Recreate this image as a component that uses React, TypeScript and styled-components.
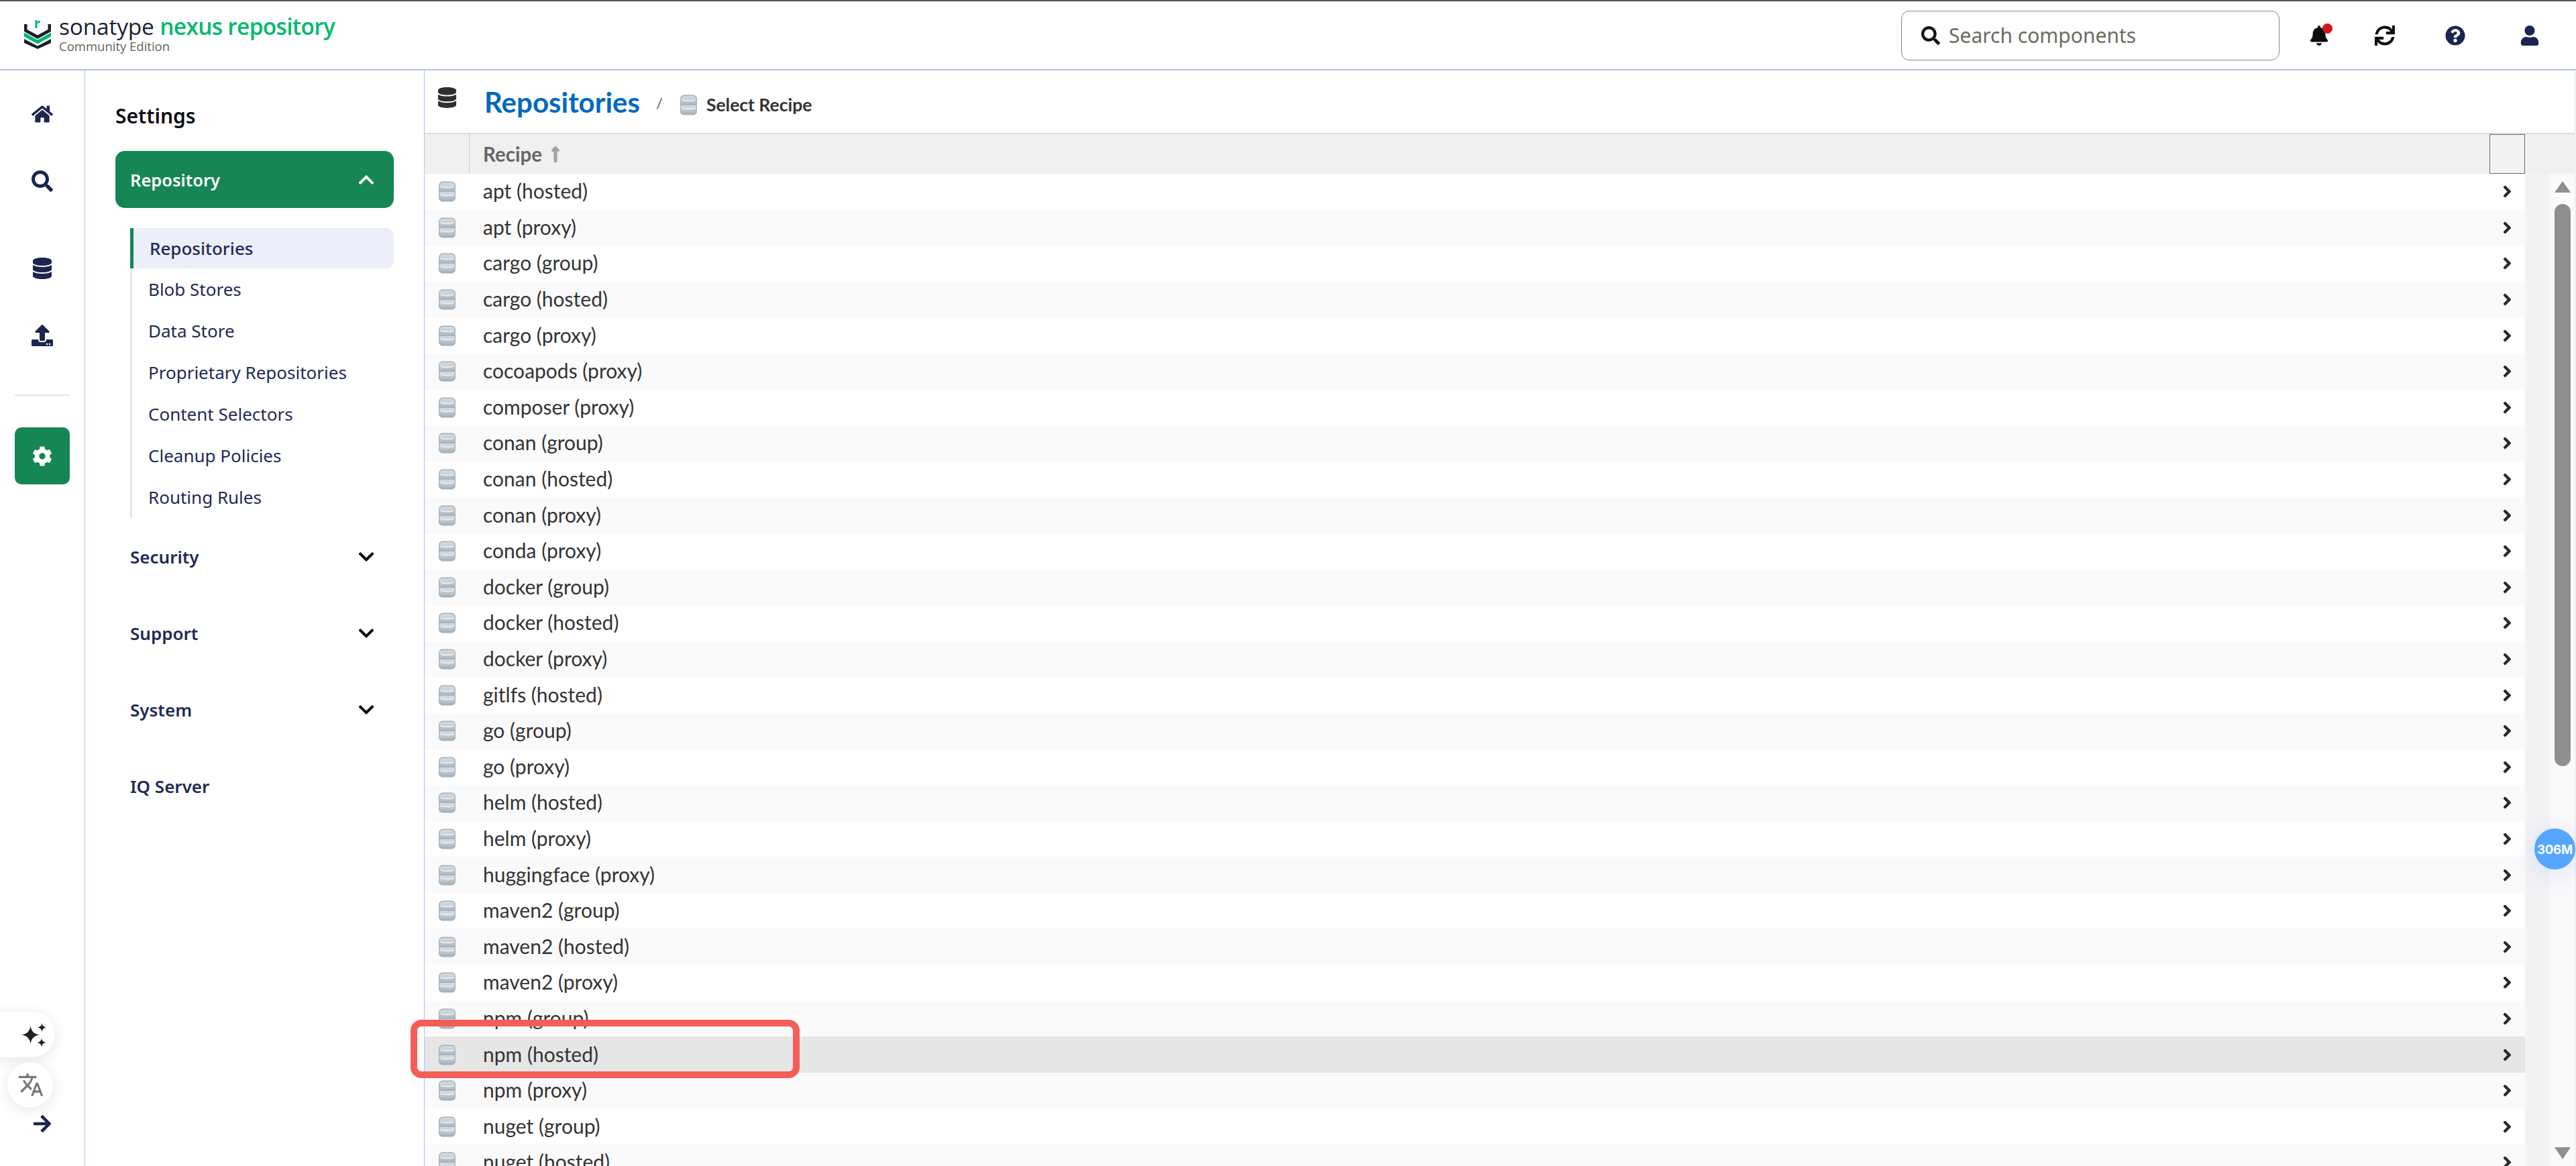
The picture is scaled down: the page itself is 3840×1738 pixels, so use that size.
import React from 'react';
import styled, { createGlobalStyle } from 'styled-components';
import {
  FaHome,
  FaSearch,
  FaDatabase,
  FaUpload,
  FaCog,
  FaChevronUp,
  FaChevronDown,
  FaChevronRight,
  FaBell,
  FaSync,
  FaQuestionCircle,
  FaUser,
  FaArrowRight,
  FaLongArrowAltUp,
} from 'react-icons/fa';
import { MdTranslate } from 'react-icons/md';

const GlobalStyle = createGlobalStyle`
  html, body {
    margin: 0;
    padding: 0;
    background: #fff;
    overflow: hidden;
  }
  * { box-sizing: border-box; }
`;

const Page = styled.div`
  position: relative;
  width: 3840px;
  height: 1738px;
  overflow: hidden;
  display: flex;
  flex-direction: column;
  font-family: 'Noto Sans', 'Open Sans', sans-serif;
  background: #fff;
`;

const TopBar = styled.header`
  flex: 0 0 105px;
  display: flex;
  align-items: center;
  border-top: 2px solid #5a4d5c;
  border-bottom: 2px solid #b3c1ea;
  padding: 0 13px 0 35px;
`;

const Logo = styled.div`
  display: flex;
  align-items: center;
  gap: 11px;
  margin-top: -5px;
`;

const LogoText = styled.div`
  display: flex;
  flex-direction: column;
`;

const Brand = styled.div`
  font-family: 'Open Sans', sans-serif;
  font-size: 33.5px;
  line-height: 38px;
  font-weight: 500;
  letter-spacing: -0.2px;
  color: #1b1f31;
  white-space: nowrap;
`;

const BrandGreen = styled.span`
  color: #00ba6c;
  font-weight: 600;
  letter-spacing: -0.7px;
`;

const Edition = styled.div`
  font-family: 'Open Sans', sans-serif;
  font-size: 18.5px;
  line-height: 22px;
  color: #63645e;
`;

const SearchBox = styled.div`
  margin-left: auto;
  width: 564px;
  height: 74px;
  border: 1px solid #85857a;
  border-radius: 12px;
  display: flex;
  align-items: center;
  gap: 13px;
  padding-left: 29px;
  color: #111;
  font-size: 28px;
`;

const Placeholder = styled.span`
  font-family: 'Noto Sans', sans-serif;
  font-size: 30px;
  color: #6b6b60;
`;

const TopIcons = styled.div`
  display: flex;
  align-items: center;
  margin-left: 11px;
`;

const TopIcon = styled.div<{ $w: number; $color: string }>`
  position: relative;
  width: ${(p) => p.$w}px;
  display: flex;
  justify-content: center;
  color: ${(p) => p.$color};
  font-size: 30px;
`;

const BellDot = styled.span`
  position: absolute;
  top: -3px;
  left: 53px;
  width: 15px;
  height: 15px;
  border-radius: 50%;
  background: #d0161b;
`;

const Body = styled.div`
  flex: 1;
  display: flex;
  min-height: 0;
`;

const Rail = styled.nav`
  flex: 0 0 127px;
  border-right: 1px solid #b3c1ea;
  display: flex;
  flex-direction: column;
  align-items: center;
  padding-top: 46px;
  padding-bottom: 48px;
  color: #1b2550;
`;

const RailIcon = styled.div<{ $gap?: number }>`
  height: 38px;
  margin-bottom: ${(p) => p.$gap ?? 62}px;
  display: flex;
  align-items: center;
  justify-content: center;
  font-size: 32px;
`;

const RailDivider = styled.div`
  width: 82px;
  height: 2px;
  background: #dfe3f3;
  margin-top: 7px;
`;

const RailActive = styled.div`
  width: 82px;
  height: 85px;
  margin-top: 47px;
  border-radius: 10px;
  background: #168654;
  color: #fff;
  font-size: 30px;
  display: flex;
  align-items: center;
  justify-content: center;
`;

const Collapse = styled.div`
  margin-top: auto;
  font-size: 30px;
  line-height: 0;
`;

const Floating = styled.div<{ $top: number; $left: number; $width: number }>`
  position: absolute;
  top: ${(p) => p.$top}px;
  left: ${(p) => p.$left}px;
  width: ${(p) => p.$width}px;
  height: 68px;
  border-radius: 34px;
  background: #fff;
  box-shadow: 0 4px 20px rgba(0, 0, 0, 0.1);
  display: flex;
  align-items: center;
  justify-content: flex-end;
`;

const FloatingGlyph = styled.div<{ $pad: number; $color: string; $size: number }>`
  padding-right: ${(p) => p.$pad}px;
  color: ${(p) => p.$color};
  font-size: ${(p) => p.$size}px;
  line-height: 0;
`;

const Settings = styled.aside`
  flex: 0 0 506px;
  border-right: 1px solid #b3c1ea;
  padding: 47px 45px 0 45px;
`;

const SettingsTitle = styled.h2`
  margin: 0 0 31px;
  font-family: 'Noto Sans', sans-serif;
  font-size: 30px;
  line-height: 42px;
  font-weight: 600;
  color: #0d0d12;
`;

const SectionActive = styled.div`
  height: 85px;
  border-radius: 14px;
  background: #168654;
  color: #fff;
  display: flex;
  align-items: center;
  justify-content: space-between;
  padding: 0 28px 0 22px;
  font-size: 25.5px;
  font-weight: 600;
`;

const SubList = styled.ul`
  list-style: none;
  margin: 30px 0 0 22px;
  padding: 0;
  border-left: 3px solid #e5e5e5;
`;

const SubItem = styled.li<{ $active?: boolean }>`
  height: ${(p) => (p.$active ? 60 : 62)}px;
  margin-left: -3px;
  display: flex;
  align-items: center;
  padding-left: ${(p) => (p.$active ? 24 : 27)}px;
  font-size: 26px;
  color: #1f2a55;
  background: ${(p) => (p.$active ? '#eceef8' : 'transparent')};
  border-left: ${(p) => (p.$active ? '5px solid #168654' : 'none')};
  border-radius: ${(p) => (p.$active ? '0 12px 12px 0' : '0')};
  font-weight: ${(p) => (p.$active ? 500 : 400)};
`;

const Section = styled.div`
  height: 114px;
  display: flex;
  align-items: center;
  justify-content: space-between;
  padding: 0 28px 0 22px;
  font-size: 26px;
  font-weight: 600;
  color: #1f2a55;
`;

const SectionList = styled.div`
  margin-top: 1px;
`;

const Chevron = styled.span<{ $dark?: boolean }>`
  font-size: 26px;
  line-height: 0;
  color: ${(p) => (p.$dark ? '#000' : '#fff')};
`;

const Main = styled.main`
  flex: 1;
  min-width: 0;
  display: flex;
  flex-direction: column;
  border-right: 2px solid #eef0f6;
  font-family: Lato, 'Open Sans', sans-serif;
`;

const PageHead = styled.div`
  flex: 0 0 93px;
  display: flex;
  align-items: flex-start;
  padding: 23px 0 0 18px;
`;

const HeadIcon = styled.div`
  font-size: 31px;
  line-height: 0;
  margin-top: 2px;
  color: #2f2f2f;
  margin-right: 40px;
`;

const Title = styled.h1`
  margin: 0;
  font-size: 42px;
  line-height: 48px;
  font-weight: 700;
  color: #0069be;
`;

const Slash = styled.span`
  margin: 12px 25px 0 24px;
  font-size: 22px;
  color: #555;
`;

const Crumb = styled.div`
  display: flex;
  align-items: center;
  gap: 13px;
  margin-top: 12px;
  font-size: 26.5px;
  line-height: 32px;
  font-weight: 700;
  color: #333;
`;

const TableHead = styled.div`
  flex: 0 0 61px;
  display: flex;
  align-items: stretch;
  background: #f0f0f0;
  border-top: 2px solid #dcdcdc;
  padding-right: 74px;
  color: #666;
`;

const HeadIconCell = styled.div`
  width: 67px;
  border-right: 1px solid #c8c8c8;
`;

const HeadLabel = styled.div`
  flex: 1;
  display: flex;
  align-items: center;
  gap: 7px;
  padding-left: 20px;
  font-size: 29.5px;
  font-weight: 700;
`;

const SortArrow = styled.span`
  color: #a3a3a3;
  font-size: 26px;
  line-height: 0;
  svg {
    stroke: currentColor;
    stroke-width: 20;
  }
`;

const HeadBox = styled.div`
  width: 53px;
  border: 1px solid #6a6a6a;
  background: #f3f3f3;
`;

const TableWrap = styled.div`
  flex: 1;
  min-height: 0;
  display: flex;
  overflow: hidden;
`;

const Rows = styled.div`
  flex: 1;
  min-width: 0;
`;

const Row = styled.div<{ $odd: boolean; $selected: boolean }>`
  height: 53.6px;
  display: flex;
  align-items: center;
  padding-left: 20px;
  font-size: 30px;
  color: #333;
  background: ${(p) => (p.$selected ? '#e6e6e6' : p.$odd ? '#fafafa' : '#fff')};
`;

const RowName = styled.span`
  margin-left: 40px;
  margin-bottom: 3px;
  flex: 1;
`;

const RowArrow = styled.span`
  width: 53px;
  display: flex;
  justify-content: center;
  font-size: 19px;
  line-height: 0;
  color: #2a2a2a;
  svg {
    stroke: currentColor;
    stroke-width: 36;
  }
`;

const Gutter = styled.div`
  flex: 0 0 37px;
  background: #f3f3f4;
`;

const Scrollbar = styled.div`
  flex: 0 0 37px;
  background: #fafafa;
  display: flex;
  flex-direction: column;
  align-items: center;
  padding-top: 11px;
`;

const ScrollUp = styled.div`
  width: 0;
  height: 0;
  border-left: 12px solid transparent;
  border-right: 12px solid transparent;
  border-bottom: 17px solid #8f8f8f;
`;

const ScrollThumb = styled.div`
  width: 24px;
  height: 838px;
  margin-top: 17px;
  border-radius: 12px;
  background: #8f8f8f;
`;

const ScrollDown = styled.div`
  width: 0;
  height: 0;
  margin-top: auto;
  margin-bottom: 10px;
  border-left: 12px solid transparent;
  border-right: 12px solid transparent;
  border-top: 18px solid #8f8f8f;
`;

const Badge = styled.div`
  position: absolute;
  top: 1235px;
  left: 3778px;
  width: 61px;
  height: 61px;
  border-radius: 50%;
  background: #55a6ff;
  box-shadow: 0 6px 40px rgba(85, 110, 255, 0.18);
  display: flex;
  align-items: center;
  justify-content: center;
  color: #fff;
  font-family: Inter, 'Noto Sans', sans-serif;
  font-size: 18.5px;
  font-weight: 700;
  letter-spacing: -0.2px;
`;

const Highlight = styled.div`
  position: absolute;
  top: 1520px;
  left: 612px;
  width: 580px;
  height: 87px;
  border: 10.5px solid #f45d58;
  border-radius: 16px;
`;

const LogoMark = () => (
  <svg width="42" height="46" viewBox="0 0 42 46">
    <path d="M1 9v11l20 11 20-11V9h-4.500v8L21 25.500 5.500 17V9z" fill="#1b1f31" />
    <rect x="17.500" y="3" width="3" height="12" fill="#00ba6c" />
    <path d="M20 6.500c1-2 2.800-3 5-3v3c-2 0-3 .8-5 2z" fill="#00ba6c" />
    <path d="M1 21.500v6L21 38.500l20-11v-6L21 32.500z" fill="#00ba6c" />
    <path d="M1 31v6l20 9 20-9v-6L21 41.500z" fill="#1b1f31" />
  </svg>
);

const RecipeIcon = () => (
  <svg width="27" height="31" viewBox="0 0 27 31">
    <defs>
      <linearGradient id="can" x1="0" y1="0" x2="0" y2="1">
        <stop offset="0" stopColor="#d6dde3" />
        <stop offset="0.45" stopColor="#c4ced6" />
        <stop offset="1" stopColor="#a8b5bf" />
      </linearGradient>
    </defs>
    <path d="M1 6c0-3 3-5.500 6-5.500h13c3 0 6 2.500 6 5.500v19c0 3-3 5.500-6 5.500H7c-3 0-6-2.500-6-5.500z" fill="#a3afb8" />
    <path d="M2 6c0-2 3-4 6-4h11c3 0 6 2 6 4v8c0 .6-.5 1-1 1H3c-.5 0-1-.4-1-1z" fill="url(#can)" />
    <path d="M2 17c0-.6.5-1 1-1h21c.5 0 1 .4 1 1v7c0 2-3 4.500-6 4.500H8c-3 0-6-2.500-6-4.500z" fill="url(#can)" />
    <path d="M4 7c3 1.800 16 1.800 19 0v2c-3 1.800-16 1.800-19 0z" fill="#e6ebef" />
    <path d="M4 19c3 1.800 16 1.800 19 0v2c-3 1.800-16 1.800-19 0z" fill="#e6ebef" />
  </svg>
);

const Sparkles = () => (
  <svg width="37" height="35" viewBox="0 0 37 35" fill="#222">
    <path d="M13.500 4Q15 16 27 17.500 15 19 13.500 31 12 19 0 17.500 12 16 13.500 4z" />
    <path d="M30.500 0Q31.200 5.800 37 6.500 31.200 7.200 30.500 13 29.800 7.200 24 6.500 29.800 5.800 30.500 0z" />
    <path d="M30 22.500Q30.700 28.300 36.500 29 30.700 29.700 30 35.500 29.300 29.700 23.500 29 29.300 28.300 30 22.500z" />
  </svg>
);

const recipes = [
  'apt (hosted)', 'apt (proxy)', 'cargo (group)', 'cargo (hosted)', 'cargo (proxy)',
  'cocoapods (proxy)', 'composer (proxy)', 'conan (group)', 'conan (hosted)', 'conan (proxy)',
  'conda (proxy)', 'docker (group)', 'docker (hosted)', 'docker (proxy)', 'gitlfs (hosted)',
  'go (group)', 'go (proxy)', 'helm (hosted)', 'helm (proxy)', 'huggingface (proxy)',
  'maven2 (group)', 'maven2 (hosted)', 'maven2 (proxy)', 'npm (group)', 'npm (hosted)',
  'npm (proxy)', 'nuget (group)', 'nuget (hosted)',
];

const subItems = ['Blob Stores', 'Data Store', 'Proprietary Repositories', 'Content Selectors', 'Cleanup Policies', 'Routing Rules'];

const App: React.FC = () => (
  <Page>
    <GlobalStyle />
    <TopBar>
      <Logo>
        <LogoMark />
        <LogoText>
          <Brand>
            sonatype <BrandGreen>nexus repository</BrandGreen>
          </Brand>
          <Edition>Community Edition</Edition>
        </LogoText>
      </Logo>
      <SearchBox>
        <FaSearch />
        <Placeholder>Search components</Placeholder>
      </SearchBox>
      <TopIcons>
        <TopIcon $w={96} $color="#0d0d0d">
          <FaBell />
          <BellDot />
        </TopIcon>
        <TopIcon $w={100} $color="#0d0d0d">
          <FaSync />
        </TopIcon>
        <TopIcon $w={110} $color="#1b2550">
          <FaQuestionCircle />
        </TopIcon>
        <TopIcon $w={112} $color="#1b2550">
          <FaUser />
        </TopIcon>
      </TopIcons>
    </TopBar>

    <Body>
      <Rail>
        <RailIcon><FaHome /></RailIcon>
        <RailIcon $gap={92}><FaSearch /></RailIcon>
        <RailIcon><FaDatabase /></RailIcon>
        <RailIcon><FaUpload /></RailIcon>
        <RailDivider />
        <RailActive><FaCog /></RailActive>
        <Collapse><FaArrowRight /></Collapse>
      </Rail>

      <Settings>
        <SettingsTitle>Settings</SettingsTitle>
        <SectionActive>
          Repository
          <Chevron><FaChevronUp /></Chevron>
        </SectionActive>
        <SubList>
          <SubItem $active>Repositories</SubItem>
          {subItems.map((name) => (
            <SubItem key={name}>{name}</SubItem>
          ))}
        </SubList>
        <SectionList>
          {['Security', 'Support', 'System'].map((name) => (
            <Section key={name}>
              {name}
              <Chevron $dark><FaChevronDown /></Chevron>
            </Section>
          ))}
          <Section>IQ Server</Section>
        </SectionList>
      </Settings>

      <Main>
        <PageHead>
          <HeadIcon><FaDatabase /></HeadIcon>
          <Title>Repositories</Title>
          <Slash>/</Slash>
          <Crumb>
            <RecipeIcon />
            Select Recipe
          </Crumb>
        </PageHead>
        <TableHead>
          <HeadIconCell />
          <HeadLabel>
            Recipe
            <SortArrow><FaLongArrowAltUp /></SortArrow>
          </HeadLabel>
          <HeadBox />
        </TableHead>
        <TableWrap>
          <Rows>
            {recipes.map((name, i) => (
              <Row key={name} $odd={i % 2 === 1} $selected={name === 'npm (hosted)'}>
                <RecipeIcon />
                <RowName>{name}</RowName>
                <RowArrow><FaChevronRight /></RowArrow>
              </Row>
            ))}
          </Rows>
          <Gutter />
          <Scrollbar>
            <ScrollUp />
            <ScrollThumb />
            <ScrollDown />
          </Scrollbar>
        </TableWrap>
      </Main>
    </Body>

    <Floating $top={1508} $left={-40} $width={122}>
      <FloatingGlyph $pad={13} $color="#222" $size={36}><Sparkles /></FloatingGlyph>
    </Floating>
    <Floating $top={1583} $left={11} $width={68}>
      <FloatingGlyph $pad={13} $color="#777" $size={40}><MdTranslate /></FloatingGlyph>
    </Floating>
    <Badge>306M</Badge>
    <Highlight />
  </Page>
);

export default App;
